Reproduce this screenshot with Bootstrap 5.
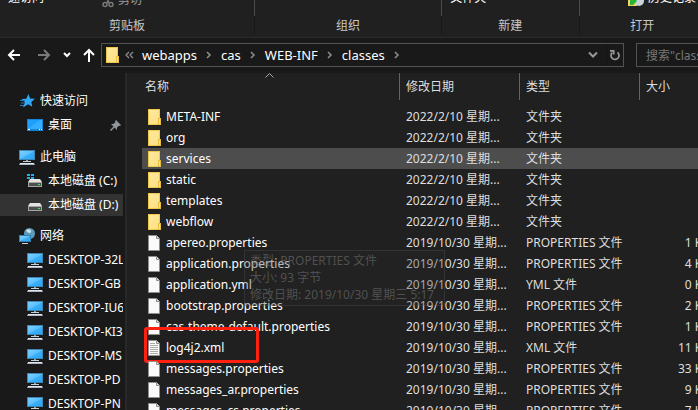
<!DOCTYPE html>
<html lang="zh-CN" data-bs-theme="dark">
<head>
<meta charset="utf-8">
<meta name="viewport" content="width=device-width, initial-scale=1">
<title>classes</title>
<link href="https://cdn.jsdelivr.net/npm/bootstrap@5.3.0/dist/css/bootstrap.min.css" rel="stylesheet">
<style>
  body { font: 12px/20px "Noto Sans", "Noto Sans CJK SC", sans-serif; background: #191919; color: #fff; }
  button { font: inherit; color: inherit; background: none; border: 0; padding: 0; white-space: nowrap; }
  svg { display: block; flex: none; }

  .ribbon { height: 38px; background: #202020; border-bottom: 1px solid #2b2b2b; }
  .ribbon-group { height: 37px; overflow: hidden; }
  .ribbon-group + .ribbon-group { border-left: 1px solid #181818; border-image: linear-gradient(#4a4a4a 16px, #181818 16px 33px, transparent 33px) 1; }
  .ribbon-cmds { height: 16px; align-items: flex-end; }
  .ribbon-cmds button { line-height: 16px; margin-bottom: 10px; }
  .ribbon-cmds .cut-btn { color: #9a9a9a; margin-bottom: 8px; margin-left: 58px; }
  .ribbon-label { color: #c8c8c8; }
  .grp-clip { flex: 255 1 0; }
  .grp-org { flex: 187 1 0; }
  .grp-new { flex: 137 1 0; }
  .grp-open { flex: 126 1 0; margin-right: -7px; }
  .grp-open .ribbon-cmds { padding-right: 9px; }

  .address-row { height: 35px; padding: 5px 0 6px 7px; }
  .nav-btns { width: 94px; gap: 12px; }
  .crumbs { height: 24px; border: 1px solid #535353; padding-left: 2px; }
  .crumbs button { font-size: 13px; }
  .crumb-sep { width: 24px; color: #8c8c8c; }
  .reload { width: 17px; border-left: 1px solid #141414 !important; }
  .search-box { width: 62px; margin-left: 12px; overflow: hidden; }
  .search-box input { width: 180px; height: 24px; background: #191919; border: 1px solid #535353; color: #777; padding: 0 9px; font-size: 12px; }
  .search-box input::placeholder { color: #777; opacity: 1; }

  .sidebar { width: 127px; border-right: 2px solid #282828; padding-top: 16px; padding-right: 2px; }
  .side-group { margin-bottom: 8px; }
  .side-item { display: flex; align-items: center; gap: 5px; height: 24px; padding-left: 19px; color: #fff; text-decoration: none; white-space: nowrap; overflow: hidden; }
  .side-child { padding-left: 27px; }
  .side-selected { background: #333; height: 22px; margin: 1px 0; }
  .side-pin { margin-left: auto; margin-right: 2px; }

  .files { background: #202020; padding-left: 15px; }
  .file-table { width: calc(100% + 22px); table-layout: fixed; border-collapse: separate; border-spacing: 0; }
  .file-table th { font-weight: 400; height: 27px; padding: 0 0 0 6px; color: #dedede; border-right: 1px solid #636363; position: relative; }
  .file-table th:first-child { padding-left: 3px; }
  .file-table td { height: 21px; padding: 0 0 0 6px; color: #dedede; white-space: nowrap; overflow: hidden; text-overflow: ellipsis; }
  .file-table td:first-child { padding-left: 4px; color: #fff; overflow: visible; position: relative; }
  .file-table td:last-child { padding: 0 10px 0 0; text-align: right; }
  .file-table tbody::before { content: ""; display: block; height: 6px; }
  .file-name { display: flex; align-items: center; gap: 4px; height: 21px; }
  .row-hover td { background: #4d4d4d; }
  .sort-mark { position: absolute; top: 0; left: 50%; margin-left: -6px; }
  .col-date, .col-kind { width: 120px; }
  .col-size { width: 80px; }
  .red-frame { position: absolute; left: 2px; top: -10px; width: 115px; height: 36px; border: 3px solid #ff2010; border-radius: 3px; }
  .hover-tip { position: absolute; left: 117px; top: 177px; border: 1px solid rgba(255,255,255,.08); background: rgba(40,40,40,.3); color: rgba(140,140,140,.45); padding: 1px 10px 2px 5px; line-height: 17px; white-space: nowrap; }
</style>
<script src="https://cdn.jsdelivr.net/npm/bootstrap@5.3.0/dist/js/bootstrap.bundle.min.js"></script>
</head>
<body class="vh-100 d-flex flex-column overflow-hidden">

<svg width="0" height="0" class="position-absolute" aria-hidden="true">
  <defs>
    <linearGradient id="gScreen" x1="0" y1="0" x2="1" y2="1"><stop offset="0" stop-color="#7fd0ff"/><stop offset=".5" stop-color="#5cc0ff"/><stop offset=".52" stop-color="#3cb0fb"/><stop offset="1" stop-color="#2aa5f5"/></linearGradient>
    <linearGradient id="gFolder" x1="0" y1="0" x2="1" y2="1"><stop offset="0" stop-color="#ffe9a2"/><stop offset="1" stop-color="#ffdf7e"/></linearGradient>
  </defs>
  <symbol id="folder" viewBox="0 0 16 16"><path d="M2 0h12v16H2z" fill="#f0c94a"/><path d="M3 1h10v10h-1v4H3z" fill="url(#gFolder)"/><path d="M12 9h3v7h-3z" fill="#e8bf45"/><path d="M13 10h1v5h-1z" fill="#ffe28a"/></symbol>
  <symbol id="file" viewBox="0 0 16 16"><path d="M2.500 .5h8l3 3v12h-11z" fill="#fafafa" stroke="#8f8f8f"/><path d="M10.500 .5v3h3" fill="#ddd" stroke="#8f8f8f"/></symbol>
  <symbol id="filetext" viewBox="0 0 16 16"><path d="M2.500 .5h8l3 3v12h-11z" fill="#fafafa" stroke="#8f8f8f"/><path d="M10.500 .5v3h3" fill="#ddd" stroke="#8f8f8f"/><path d="M4 3.500h5M4 5.500h8M4 7.500h8M4 9.500h8M4 11.500h8M4 13.500h8" stroke="#aaa"/></symbol>
  <symbol id="pc" viewBox="0 0 16 16"><path d="M0 1h16v10H0z" fill="#3b86b5"/><path d="M1 2h14v8H1z" fill="url(#gScreen)"/><path d="M7 11h2v1H7z" fill="#8fa3b0"/><path d="M4 12h8v1H4z" fill="#c7d0d8"/><path d="M1 14h14l1 2H0z" fill="#a9b6c4"/><path d="M1 14h14v1H1z" fill="#e0e7ee"/></symbol>
  <symbol id="drive" viewBox="0 0 16 16"><path d="M3 6h10l2 3H1z" fill="#e3e3e3"/><path d="M1 9h14v5H1z" fill="#a5a5a5"/><path d="M2 10h12v3H2z" fill="#4c5150"/><path d="M11 11h2v1h-2z" fill="#38f04a"/></symbol>
  <symbol id="chev" viewBox="0 0 6 8"><path d="M1 1l3 3-3 3" fill="none" stroke="#8c8c8c" stroke-width="1.600"/></symbol>
</svg>

<header class="ribbon d-flex flex-shrink-0 overflow-hidden">
  <div class="ribbon-group grp-clip">
    <div class="ribbon-cmds d-flex">
      <button type="button" class="ms-2">速访问</button>
      <button type="button" class="cut-btn d-flex align-items-end gap-1">
        <svg width="12" height="16" viewBox="0 0 12 16" fill="none" stroke="#777" stroke-width="1.500"><path d="M3 1l4 10M9 1L5 11"/><circle cx="3" cy="12.500" r="2"/><circle cx="9" cy="12.500" r="2"/></svg>剪切</button>
    </div>
    <div class="ribbon-label text-center">剪贴板</div>
  </div>
  <div class="ribbon-group grp-org">
    <div class="ribbon-cmds d-flex"></div>
    <div class="ribbon-label text-center">组织</div>
  </div>
  <div class="ribbon-group grp-new">
    <div class="ribbon-cmds d-flex"><button type="button" class="ps-1 ms-1">文件夹</button></div>
    <div class="ribbon-label text-center">新建</div>
  </div>
  <div class="ribbon-group grp-open">
    <div class="ribbon-cmds d-flex justify-content-end">
      <button type="button" class="d-flex align-items-end gap-1">
        <svg width="16" height="16" viewBox="0 0 16 16"><path d="M0 2h9v14H0z" fill="#f4d564"/><circle cx="11" cy="11" r="5" fill="#c9d3da"/><path d="M2 10h3V7l4 4-4 4H2z" fill="#28b535"/></svg>历史记录</button>
    </div>
    <div class="ribbon-label text-center">打开</div>
  </div>
</header>

<nav class="address-row d-flex flex-shrink-0" aria-label="地址栏">
  <div class="nav-btns d-flex align-items-center">
    <button type="button" aria-label="后退"><svg width="14" height="14" viewBox="0 0 14 14" fill="none" stroke="#fff" stroke-width="2"><path d="M13 7H2M7 2L2 7l5 5"/></svg></button>
    <button type="button" class="ms-1" aria-label="前进"><svg width="14" height="14" viewBox="0 0 14 14" fill="none" stroke="#7a7a7a" stroke-width="2"><path d="M1 7h11M7 2l5 5-5 5"/></svg></button>
    <button type="button" aria-label="最近"><svg width="8" height="6" viewBox="0 0 8 6" fill="none" stroke="#fff" stroke-width="2"><path d="M1 1l3 3 3-3"/></svg></button>
    <button type="button" aria-label="向上"><svg width="12" height="14" viewBox="0 0 12 14" fill="none" stroke="#fff" stroke-width="2"><path d="M6 14V2M1 7l5-5 5 5"/></svg></button>
  </div>
  <div class="crumbs d-flex align-items-center flex-grow-1">
    <svg width="16" height="16"><use href="#folder"/></svg>
    <svg class="ms-1 me-2" width="10" height="8" viewBox="0 0 10 8" fill="none" stroke="#8c8c8c" stroke-width="1.300"><path d="M5 1L2 4l3 3M9 1L6 4l3 3"/></svg>
    <button type="button">webapps</button>
    <span class="crumb-sep d-flex justify-content-center"><svg width="6" height="8"><use href="#chev"/></svg></span>
    <button type="button">cas</button>
    <span class="crumb-sep d-flex justify-content-center"><svg width="6" height="8"><use href="#chev"/></svg></span>
    <button type="button">WEB-INF</button>
    <span class="crumb-sep d-flex justify-content-center"><svg width="6" height="8"><use href="#chev"/></svg></span>
    <button type="button">classes</button>
    <span class="crumb-sep d-flex justify-content-center"><svg width="6" height="8"><use href="#chev"/></svg></span>
    <button type="button" class="ms-auto me-2" aria-label="展开"><svg width="10" height="8" viewBox="0 0 10 8" fill="none" stroke="#999" stroke-width="2"><path d="M1 1.500l4 4 4-4"/></svg></button>
    <button type="button" class="reload h-100 d-flex align-items-center justify-content-center" aria-label="刷新"><svg width="12" height="12" viewBox="0 0 12 12" fill="none" stroke="#999" stroke-width="1.700"><path d="M8.500 3.300A4 4 0 1 1 3.200 3.600M1 1.800h3.700v3.700"/></svg></button>
  </div>
  <div class="search-box"><input type="text" aria-label="搜索" placeholder='搜索"classes"'></div>
</nav>

<div class="d-flex flex-grow-1 overflow-hidden">
  <aside class="sidebar flex-shrink-0 overflow-hidden">
    <div class="side-group">
      <a class="side-item" href="#"><svg width="16" height="16" viewBox="0 0 16 16"><path d="M9.500 1l1.600 4.600 4.900.1-3.700 3.200 1 4.900-4.200-2.500L4 14.500l2-5.300-3.500-3.200 4.700-.2z" fill="#2fa8f5"/><path d="M1 7.500h5M2 10h4M1 12.500h4" stroke="#2479b8"/></svg>快速访问</a>
      <a class="side-item side-child" href="#"><svg width="16" height="16" viewBox="0 0 16 16"><path d="M0 2h16v12H0z" fill="#1584d6"/><path d="M1 3h14v9H1z" fill="#1fa0fb"/><path d="M1 12L13 3h2v9z" fill="#35aefe"/><path d="M1 12.500h2M12 12.500h1M14 12.500h1" stroke="#fff"/></svg>桌面<svg class="side-pin" width="11" height="11" viewBox="0 0 11 11"><path d="M6 0l5 5-1 1-1-.3L7 7.600 7 10 4.500 7.400 1 11 0 10l3.500-3.600L1 4l2.400-.1L5.500 2 5 1z" fill="#8f979d"/></svg></a>
    </div>
    <div class="side-group">
      <a class="side-item" href="#"><svg width="16" height="16"><use href="#pc"/></svg>此电脑</a>
      <a class="side-item side-child" href="#"><svg width="16" height="16" viewBox="0 0 16 16"><use href="#drive"/><path d="M0 1h3v2H0zM4 1h3v2H4zM0 4h3v2H0zM4 4h3v2H4z" fill="#16b4f0"/></svg>本地磁盘 (C:)</a>
      <a class="side-item side-child side-selected" href="#" aria-current="true"><svg width="16" height="16"><use href="#drive"/></svg>本地磁盘 (D:)</a>
    </div>
    <div class="side-group">
      <a class="side-item" href="#"><svg width="16" height="16" viewBox="0 0 16 16"><circle cx="10.500" cy="5.500" r="5.500" fill="#5c9cba"/><path d="M7 2c3-2 6 0 5 2s-4 1-5-2z" fill="#c5e3ef"/><path d="M0 7h12v7H0z" fill="#3380b0"/><path d="M1 8h10v5H1z" fill="url(#gScreen)"/><path d="M3 15h6v1H3z" fill="#c7d0d8"/></svg>网络</a>
      <a class="side-item side-child" href="#"><svg width="16" height="16"><use href="#pc"/></svg>DESKTOP-32L</a>
      <a class="side-item side-child" href="#"><svg width="16" height="16"><use href="#pc"/></svg>DESKTOP-GB</a>
      <a class="side-item side-child" href="#"><svg width="16" height="16"><use href="#pc"/></svg>DESKTOP-IU6</a>
      <a class="side-item side-child" href="#"><svg width="16" height="16"><use href="#pc"/></svg>DESKTOP-KI3</a>
      <a class="side-item side-child" href="#"><svg width="16" height="16"><use href="#pc"/></svg>DESKTOP-MS</a>
      <a class="side-item side-child" href="#"><svg width="16" height="16"><use href="#pc"/></svg>DESKTOP-PD</a>
      <a class="side-item side-child" href="#"><svg width="16" height="16"><use href="#pc"/></svg>DESKTOP-PN</a>
    </div>
  </aside>

  <main class="files flex-grow-1 overflow-hidden position-relative">
    <table class="file-table">
      <colgroup><col><col class="col-date"><col class="col-kind"><col class="col-size"></colgroup>
      <thead>
        <tr>
          <th scope="col"><button type="button">名称</button><svg class="sort-mark" width="9" height="5" viewBox="0 0 9 5" fill="none" stroke="#aaa"><path d="M.5 4.500l4-4 4 4"/></svg></th>
          <th scope="col"><button type="button">修改日期</button></th>
          <th scope="col"><button type="button">类型</button></th>
          <th scope="col"><button type="button">大小</button></th>
        </tr>
      </thead>
      <tbody>
        <tr><td><span class="file-name"><svg width="16" height="16"><use href="#folder"/></svg>META-INF</span></td><td>2022/2/10 星期...</td><td>文件夹</td><td></td></tr>
        <tr><td><span class="file-name"><svg width="16" height="16"><use href="#folder"/></svg>org</span></td><td>2022/2/10 星期...</td><td>文件夹</td><td></td></tr>
        <tr class="row-hover"><td><span class="file-name"><svg width="16" height="16"><use href="#folder"/></svg>services</span></td><td>2022/2/10 星期...</td><td>文件夹</td><td></td></tr>
        <tr><td><span class="file-name"><svg width="16" height="16"><use href="#folder"/></svg>static</span></td><td>2022/2/10 星期...</td><td>文件夹</td><td></td></tr>
        <tr><td><span class="file-name"><svg width="16" height="16"><use href="#folder"/></svg>templates</span></td><td>2022/2/10 星期...</td><td>文件夹</td><td></td></tr>
        <tr><td><span class="file-name"><svg width="16" height="16"><use href="#folder"/></svg>webflow</span></td><td>2022/2/10 星期...</td><td>文件夹</td><td></td></tr>
        <tr><td><span class="file-name"><svg width="16" height="16"><use href="#file"/></svg>apereo.properties</span></td><td>2019/10/30 星期...</td><td>PROPERTIES 文件</td><td>1 KB</td></tr>
        <tr><td><span class="file-name"><svg width="16" height="16"><use href="#file"/></svg>application.properties</span></td><td>2019/10/30 星期...</td><td>PROPERTIES 文件</td><td>4 KB</td></tr>
        <tr><td><span class="file-name"><svg width="16" height="16"><use href="#file"/></svg>application.yml</span></td><td>2019/10/30 星期...</td><td>YML 文件</td><td>0 KB</td></tr>
        <tr><td><span class="file-name"><svg width="16" height="16"><use href="#file"/></svg>bootstrap.properties</span></td><td>2019/10/30 星期...</td><td>PROPERTIES 文件</td><td>2 KB</td></tr>
        <tr><td><span class="file-name"><svg width="16" height="16"><use href="#file"/></svg>cas-theme-default.properties</span></td><td>2019/10/30 星期...</td><td>PROPERTIES 文件</td><td>1 KB</td></tr>
        <tr><td><span class="file-name"><svg width="16" height="16"><use href="#filetext"/></svg>log4j2.xml</span><span class="red-frame"></span></td><td>2019/10/30 星期...</td><td>XML 文件</td><td>11 KB</td></tr>
        <tr><td><span class="file-name"><svg width="16" height="16"><use href="#file"/></svg>messages.properties</span></td><td>2019/10/30 星期...</td><td>PROPERTIES 文件</td><td>33 KB</td></tr>
        <tr><td><span class="file-name"><svg width="16" height="16"><use href="#file"/></svg>messages_ar.properties</span></td><td>2019/10/30 星期...</td><td>PROPERTIES 文件</td><td>9 KB</td></tr>
        <tr><td><span class="file-name"><svg width="16" height="16"><use href="#file"/></svg>messages_cs.properties</span></td><td>2019/10/30 星期...</td><td>PROPERTIES 文件</td><td>7 KB</td></tr>
      </tbody>
    </table>
    <div class="hover-tip" role="tooltip">类型: PROPERTIES 文件<br>大小: 93 字节<br>修改日期: 2019/10/30 星期三 5:17</div>
  </main>
</div>
</body>
</html>
